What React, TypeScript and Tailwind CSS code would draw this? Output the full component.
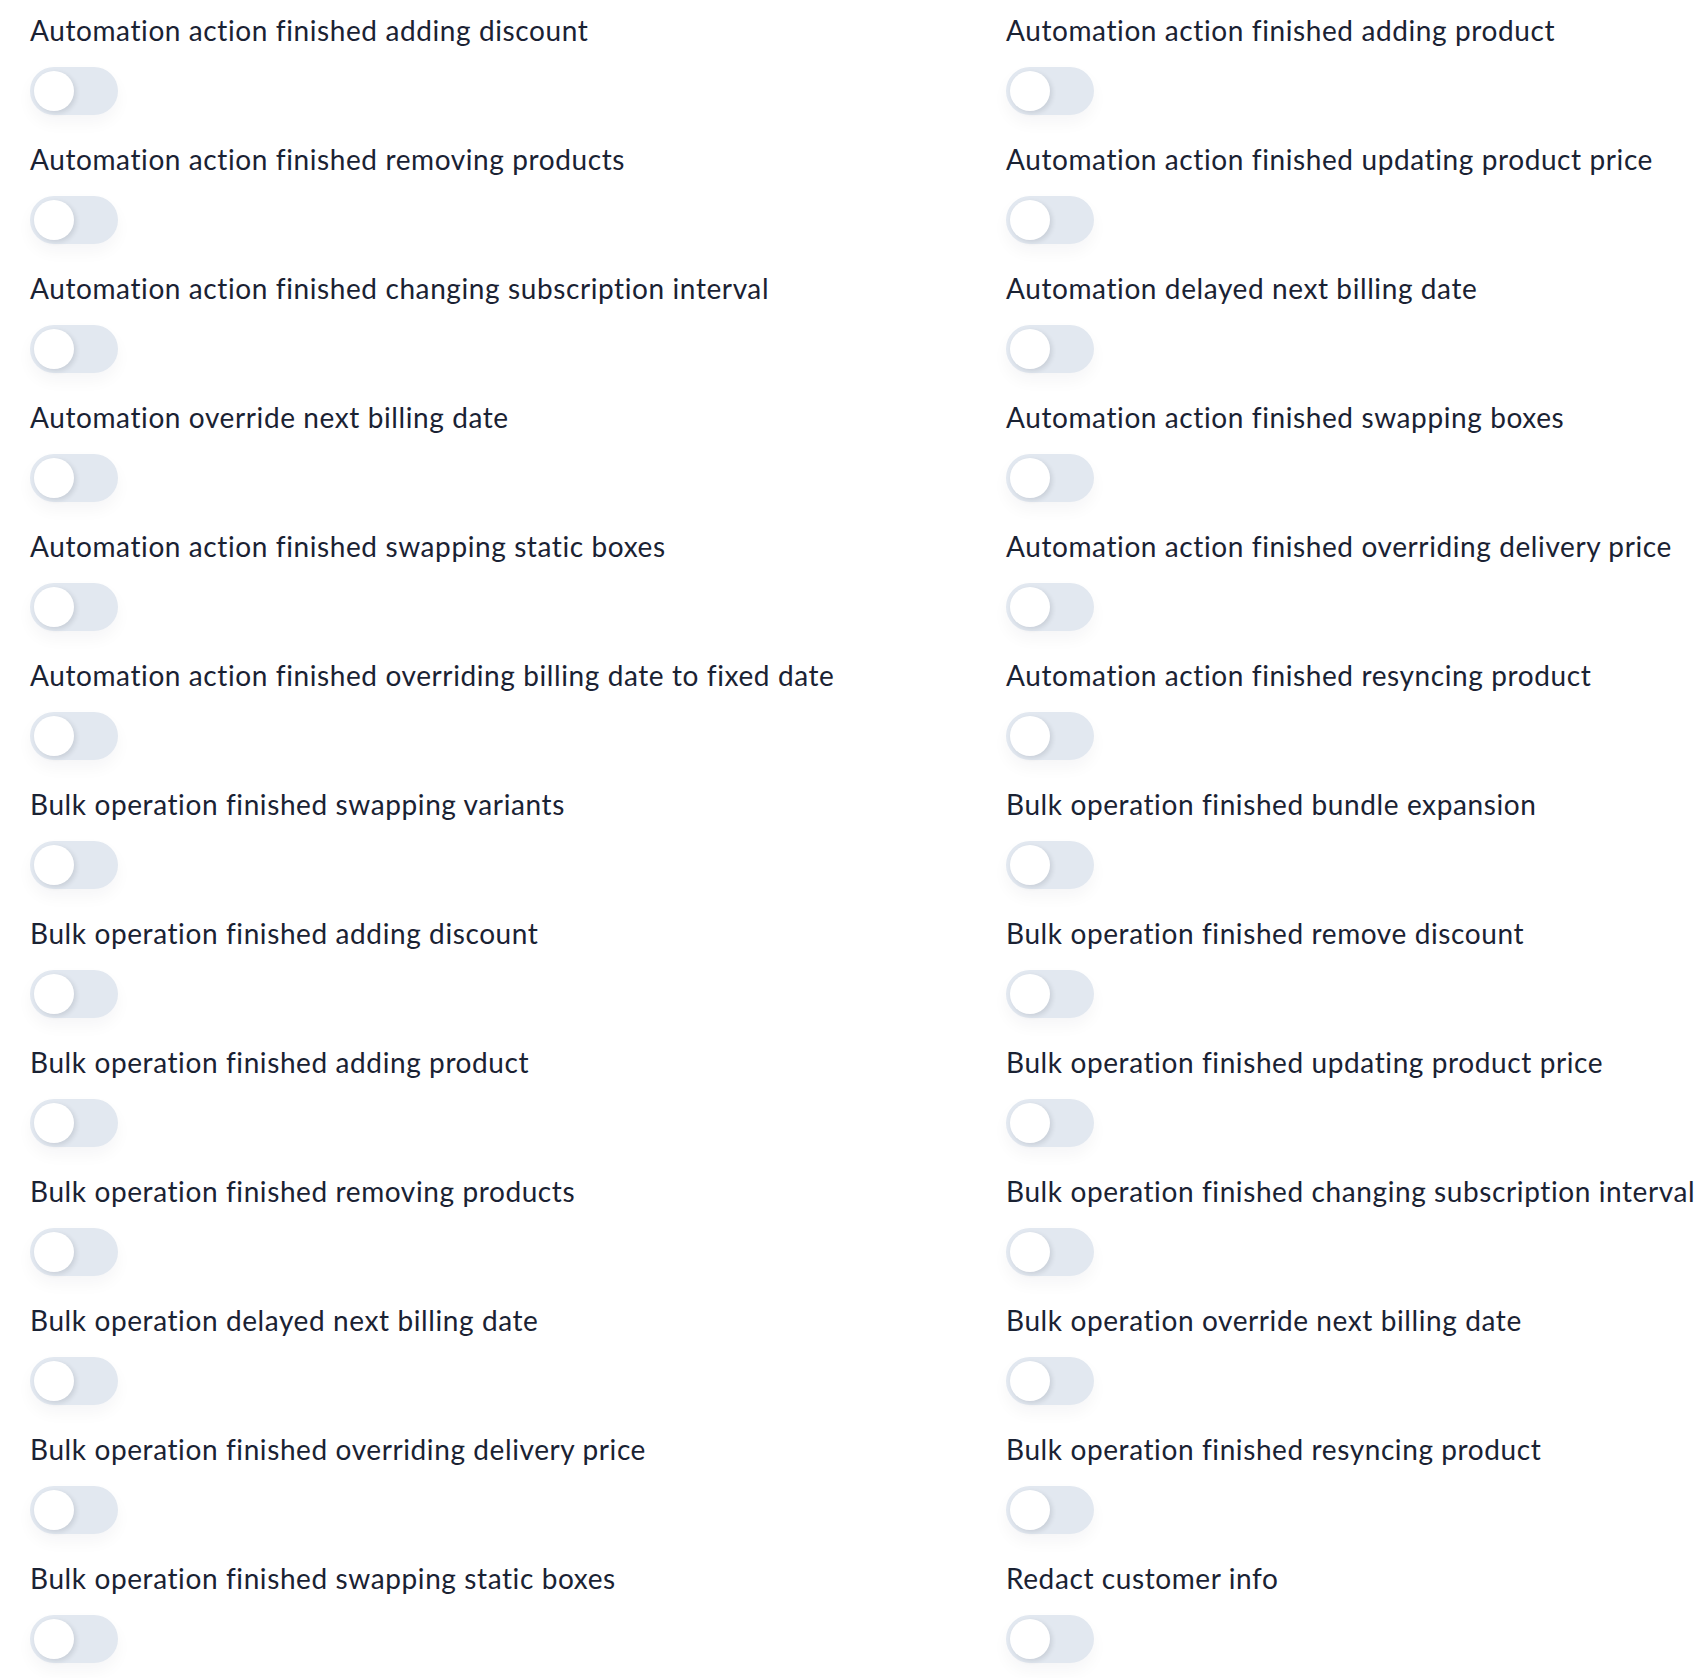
import React from 'react';

const events: string[] = [
  'Automation action finished adding discount',
  'Automation action finished adding product',
  'Automation action finished removing products',
  'Automation action finished updating product price',
  'Automation action finished changing subscription interval',
  'Automation delayed next billing date',
  'Automation override next billing date',
  'Automation action finished swapping boxes',
  'Automation action finished swapping static boxes',
  'Automation action finished overriding delivery price',
  'Automation action finished overriding billing date to fixed date',
  'Automation action finished resyncing product',
  'Bulk operation finished swapping variants',
  'Bulk operation finished bundle expansion',
  'Bulk operation finished adding discount',
  'Bulk operation finished remove discount',
  'Bulk operation finished adding product',
  'Bulk operation finished updating product price',
  'Bulk operation finished removing products',
  'Bulk operation finished changing subscription interval',
  'Bulk operation delayed next billing date',
  'Bulk operation override next billing date',
  'Bulk operation finished overriding delivery price',
  'Bulk operation finished resyncing product',
  'Bulk operation finished swapping static boxes',
  'Redact customer info',
];

function Toggle() {
  const [on, setOn] = React.useState(false);
  return (
    <button
      type="button"
      onClick={() => setOn(!on)}
      className={`relative flex h-12 w-[88px] items-center rounded-full p-1 shadow-[0_8px_16px_rgba(15,23,42,0.04)] ${on ? 'bg-indigo-500' : 'bg-[#e2e8f0]'}`}
    >
      <span
        className={`h-10 w-10 rounded-full bg-white shadow-[2px_2px_5px_rgba(15,23,42,0.12)] transition-transform ${on ? 'translate-x-10' : ''}`}
      />
    </button>
  );
}

export default function App() {
  return (
    <div
      className="h-[1678px] overflow-hidden bg-white pl-[30px] pt-[10px] text-[#1a2233]"
      style={{ fontFamily: 'Lato, "Liberation Sans", sans-serif' }}
    >
      <div className="grid w-[1952px] grid-cols-2">
        {events.map((name) => (
          <div key={name} className="flex h-[129px] flex-col items-start">
            <span className="h-10 whitespace-nowrap text-[28px] leading-10 tracking-[0.6px] [font-variant-ligatures:none]">
              {name}
            </span>
            <div className="mt-[17px]">
              <Toggle />
            </div>
          </div>
        ))}
      </div>
    </div>
  );
}
